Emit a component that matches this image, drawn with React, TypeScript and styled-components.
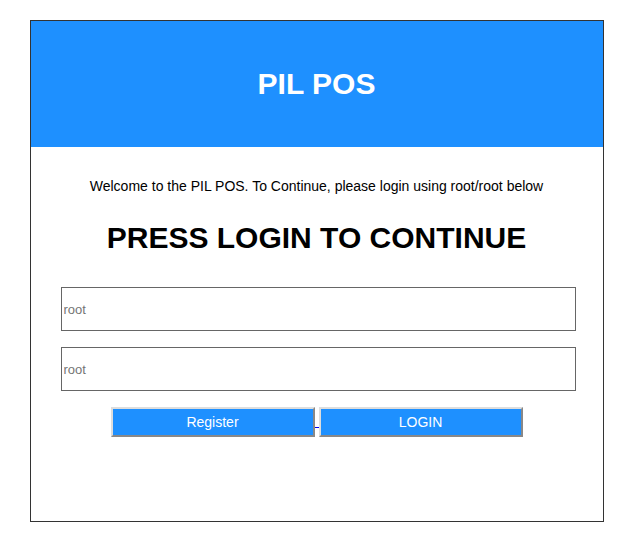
import React from "react";
import styled, { createGlobalStyle } from "styled-components";

const GlobalStyle = createGlobalStyle`
  body {
    margin: 0;
    background: #fff;
    font-family: "Liberation Sans", Arial, sans-serif;
  }
`;

const Page = styled.div`
  padding-top: 20px;
  display: flex;
  justify-content: center;
`;

const Card = styled.div`
  width: 572px;
  border: 1px solid #333;
  display: flex;
  flex-direction: column;
`;

const Header = styled.header`
  height: 126px;
  background: #1e90ff;
  display: flex;
  align-items: center;
  justify-content: center;
`;

const Title = styled.h1`
  margin: 0;
  color: #fff;
  font-size: 30px;
  font-weight: bold;
`;

const Body = styled.div`
  display: flex;
  flex-direction: column;
  align-items: center;
  padding: 31px 0 84px;
`;

const Welcome = styled.p`
  margin: 0;
  font-size: 14px;
  color: #000;
`;

const Heading = styled.h2`
  margin: 27px 0 32px;
  font-size: 30px;
  font-weight: bold;
  color: #000;
`;

const Input = styled.input`
  box-sizing: border-box;
  width: 515px;
  height: 44px;
  margin: 0 0 16px 3px;
  padding: 1px 2px;
  border: 1px solid #666;
  font-family: "Liberation Sans", Arial, sans-serif;
  font-size: 13px;
  outline: none;
  &::placeholder {
    color: #757575;
  }
`;

const Actions = styled.div`
  display: flex;
  align-items: flex-end;
`;

const ButtonLink = styled.a`
  color: #00e;
  text-decoration: underline;
  font-size: 14px;
`;

const Spacer = styled.span`
  display: inline-block;
  width: 4px;
  border-bottom: 1px solid #00e;
  margin-bottom: 9px;
`;

const Button = styled.button`
  box-sizing: border-box;
  width: 204px;
  height: 30px;
  background: #1e90ff;
  color: #fff;
  font-family: "Liberation Sans", Arial, sans-serif;
  font-size: 14px;
  border-width: 2px;
  border-style: solid;
  border-color: #ddd #888 #888 #ddd;
  padding: 0;
  cursor: pointer;
`;

export default function App() {
  return (
    <>
      <GlobalStyle />
      <Page>
        <Card>
          <Header>
            <Title>PIL POS</Title>
          </Header>
          <Body>
            <Welcome>
              Welcome to the PIL POS. To Continue, please login using root/root below
            </Welcome>
            <Heading>PRESS LOGIN TO CONTINUE</Heading>
            <Input type="text" placeholder="root" />
            <Input type="password" placeholder="root" />
            <Actions>
              <ButtonLink href="#register">
                <Button type="button">Register</Button>
              </ButtonLink>
              <Spacer />
              <ButtonLink href="#login">
                <Button type="button">LOGIN</Button>
              </ButtonLink>
            </Actions>
          </Body>
        </Card>
      </Page>
    </>
  );
}
